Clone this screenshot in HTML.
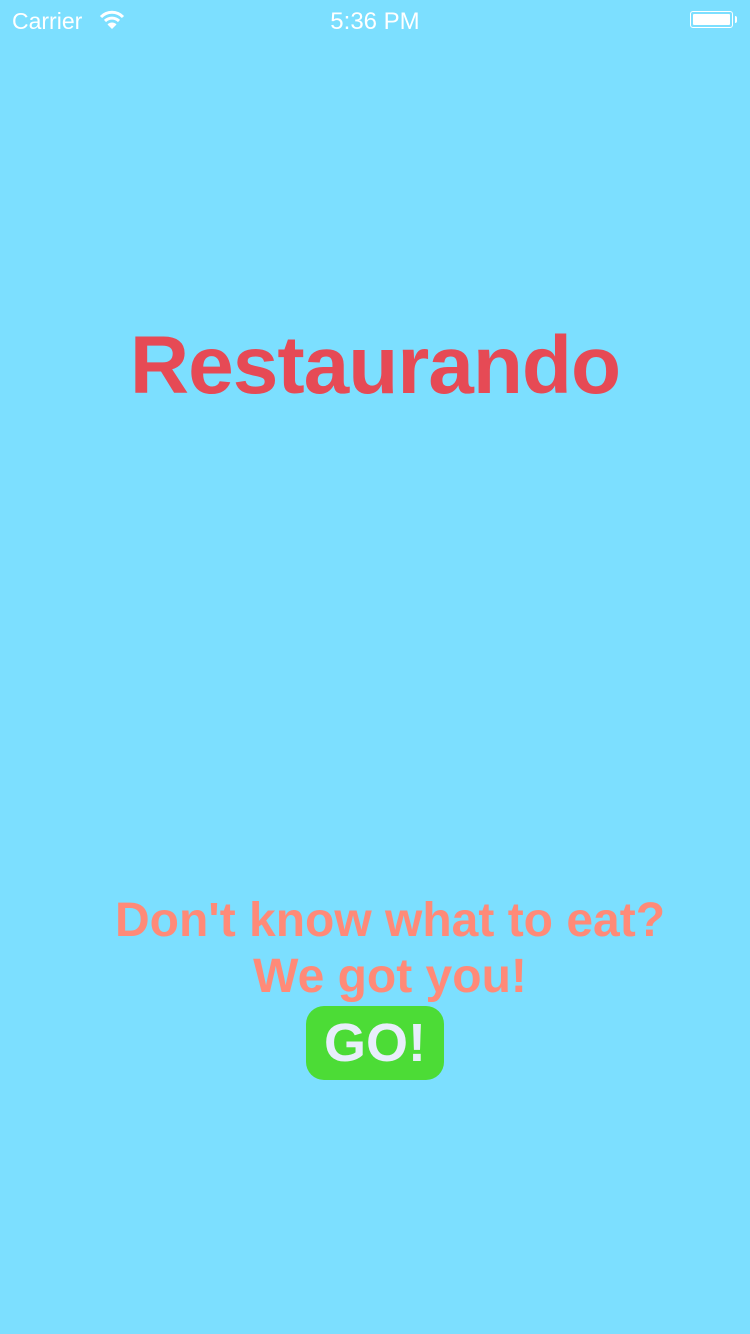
<!DOCTYPE html>
<html><head><meta charset="utf-8"><style>
body{margin:0;width:750px;height:1334px;background:#7cdfff;position:relative;overflow:hidden;font-family:"Liberation Sans",Helvetica,Arial,sans-serif}
.sb{position:absolute;top:0;left:0;width:750px;height:40px;color:#fff;font-size:23px}
.abs{position:absolute;white-space:nowrap}
</style></head><body>
<div class="sb">
<div class="abs" style="left:12px;top:8px">Carrier</div>
<svg class="abs" style="left:99px;top:10px" width="26" height="20" viewBox="0 0 26 20"><path d="M2 7 A15 15 0 0 1 24 7" stroke="#fff" stroke-width="3" fill="none"/><path d="M6 11 A10 10 0 0 1 20 11" stroke="#fff" stroke-width="3" fill="none"/><path d="M13 19 L8.5 14.5 A6 6 0 0 1 17.5 14.5 Z" fill="#fff"/></svg>
<div class="abs" style="left:0;width:750px;text-align:center;top:8px;font-size:24px">5:36 PM</div>
<div class="abs" style="left:690px;top:11px;width:43px;height:17px;border:1.5px solid #fff;border-radius:3px;box-sizing:border-box;padding:2px"><div style="background:#fff;width:100%;height:100%;border-radius:1px"></div></div>
<div class="abs" style="left:735px;top:16px;width:2px;height:7px;background:#fff;border-radius:0 2px 2px 0"></div>
</div>
<div class="abs" style="left:0;width:750px;text-align:center;top:319px;font-size:82px;font-weight:bold;color:#e64a55;letter-spacing:-1px">Restaurando</div>
<div class="abs" style="left:15px;width:750px;text-align:center;top:893px;font-size:48px;font-weight:bold;color:#ff8a78;line-height:56px">Don't know what to eat?<br>We got you!</div>
<div class="abs" style="left:306px;top:1006px;width:138px;height:74px;background:#4cdc36;border-radius:18px;color:#e8eefb;font-size:54px;font-weight:bold;text-align:center;line-height:74px">GO!</div>
</body></html>
